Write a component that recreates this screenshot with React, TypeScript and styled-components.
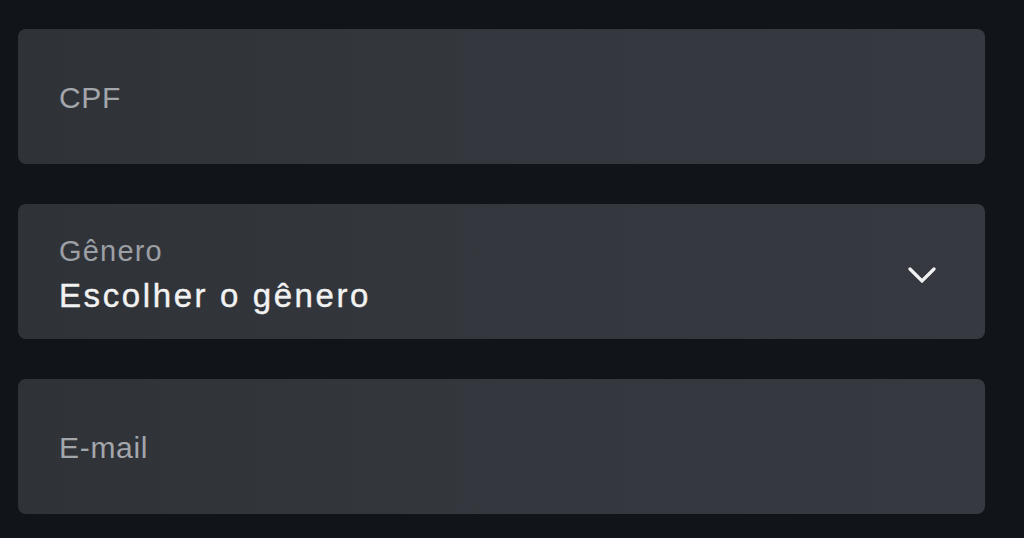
import styled, { createGlobalStyle } from "styled-components";

const GlobalStyle = createGlobalStyle`
    html, body {
        margin: 0;
        padding: 0;
        background: #111418;
    }
    body {
        font-family: "Liberation Sans", Arial, sans-serif;
    }
`

const Page = styled.div`
    display: flex;
    flex-direction: column;
    gap: 40px;
    padding: 29px 39px 24px 18px;
    min-height: 538px;
    box-sizing: border-box;
    background: #111418;
`

const Field = styled.div<{ $stacked?: boolean }>`
    height: 135px;
    box-sizing: border-box;
    display: flex;
    align-items: center;
    justify-content: space-between;
    padding: ${p => (p.$stacked ? "6px 49px 0 41px" : "3px 41px 0 41px")};
    border-radius: 8px;
    background: linear-gradient(90deg, #2f3338 0%, #34383e 50%, #363a40 100%);
`

const Texts = styled.div`
    display: flex;
    flex-direction: column;
`

const Placeholder = styled.span`
    font-size: 30px;
    line-height: 36px;
    letter-spacing: 0.7px;
    color: #a3a6ab;
`

const Label = styled.span`
    font-size: 29px;
    line-height: 34px;
    letter-spacing: 1.2px;
    color: #9c9fa4;
`

const Value = styled.span`
    margin-top: 8px;
    font-size: 33px;
    line-height: 40px;
    letter-spacing: 2.6px;
    color: #f2f2f2;
    -webkit-text-stroke: 0.4px #f2f2f2;
`

const Chevron = () => (
    <svg width="28" height="16" viewBox="0 0 28 16" fill="none">
        <polyline points="2,2 14,14 26,2" stroke="#f2f2f2" strokeWidth="3.2" strokeLinecap="round" strokeLinejoin="miter" />
    </svg>
)

export default function App() {
    return (
        <>
            <GlobalStyle />
            <Page>
                <Field>
                    <Placeholder>CPF</Placeholder>
                </Field>
                <Field $stacked>
                    <Texts>
                        <Label>Gênero</Label>
                        <Value>Escolher o gênero</Value>
                    </Texts>
                    <Chevron />
                </Field>
                <Field>
                    <Placeholder>E-mail</Placeholder>
                </Field>
            </Page>
        </>
    )
}
